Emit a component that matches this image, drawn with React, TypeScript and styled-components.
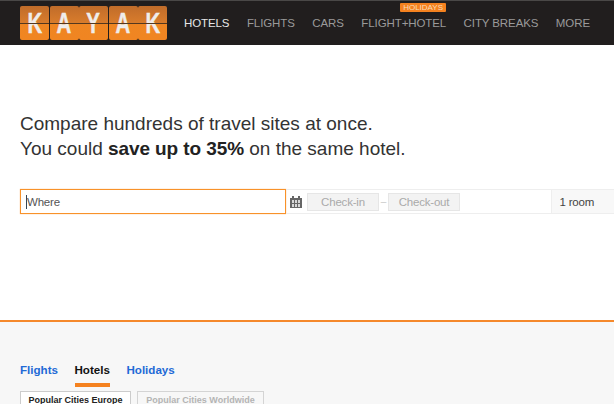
import React from 'react';
import styled, { createGlobalStyle } from 'styled-components';

const GlobalStyle = createGlobalStyle`
  html, body {
    margin: 0;
    padding: 0;
    background: #fff;
    overflow: hidden;
  }
  body {
    font-family: 'Liberation Sans', Arial, sans-serif;
  }
`;

const LETTERS = ['K', 'A', 'Y', 'A', 'K'];
const NAV_ITEMS = ['HOTELS', 'FLIGHTS', 'CARS', 'FLIGHT+HOTEL', 'CITY BREAKS', 'MORE'];

const App = () => {
  return (
    <Page>
      <GlobalStyle />
      <Header>
        <Logo>
          {LETTERS.map((letter, i) => (
            <Tile key={i}>
              <Letter>{letter}</Letter>
            </Tile>
          ))}
        </Logo>
        <Nav>
          {NAV_ITEMS.map((item) => (
            <NavItem key={item} active={item === 'HOTELS'}>
              {item}
              {item === 'FLIGHT+HOTEL' && <Badge>HOLIDAYS</Badge>}
            </NavItem>
          ))}
        </Nav>
      </Header>
      <Hero>
        <Headline>
          Compare hundreds of travel sites at once.
          <br />
          You could <strong>save up to 35%</strong> on the same hotel.
        </Headline>
        <SearchBar>
          <WhereBox>
            <Caret />
            Where
          </WhereBox>
          <DateGroup>
            <CalendarIcon width="12" height="12" viewBox="0 0 12 12">
              <path d="M0 2h12v10H0z" fill="#666" />
              <path d="M2 0h2v3H2zM8 0h2v3H8z" fill="#666" />
              <path d="M2 4h2v3H2zM5 4h2v3H5zM8 4h2v3H8zM2 8h2v3H2zM5 8h2v3H5zM8 8h2v3H8z" fill="#d8d8d8" />
            </CalendarIcon>
            <DateButton>Check-in</DateButton>
            <Dash>–</Dash>
            <DateButton>Check-out</DateButton>
          </DateGroup>
          <RoomBox>1 room</RoomBox>
        </SearchBar>
      </Hero>
      <Footer>
        <Tabs>
          <Tab>Flights</Tab>
          <Tab active>Hotels</Tab>
          <Tab>Holidays</Tab>
        </Tabs>
        <SubTabs>
          <SubTab active>Popular Cities Europe</SubTab>
          <SubTab>Popular Cities Worldwide</SubTab>
        </SubTabs>
      </Footer>
    </Page>
  );
};

export default App;

const Page = styled.div`
  width: 614px;
  height: 404px;
  overflow: hidden;
  display: flex;
  flex-direction: column;
`;

const Header = styled.div`
  flex: none;
  height: 45px;
  box-sizing: border-box;
  background: #211e1e;
  border-top: 1px solid #4a4847;
  display: flex;
  align-items: flex-start;
  padding: 5px 0 0 20px;
`;

const Logo = styled.div`
  display: flex;
  gap: 0.5px;
`;

const Tile = styled.div`
  width: 29px;
  height: 34px;
  border-radius: 2px;
  background: linear-gradient(to bottom, #c06c2a 0, #d87c2c 49%, #ef8622 51%, #f08522 100%);
  overflow: hidden;
  display: flex;
  justify-content: center;
  position: relative;

  &::after {
    content: '';
    position: absolute;
    left: 0;
    right: 0;
    top: 17px;
    height: 1px;
    background: #54381f;
  }
`;

const Letter = styled.span`
  display: inline-block;
  transform: scaleX(0.68);
  color: #efedeb;
  -webkit-text-stroke: 0.5px #efedeb;
  font-size: 30px;
  font-weight: bold;
  line-height: 34px;
`;

const Nav = styled.div`
  display: flex;
  gap: 17.5px;
  margin-left: 17px;
  padding-top: 10px;
`;

const NavItem = styled.div<{ active?: boolean }>`
  position: relative;
  font-size: 11.5px;
  letter-spacing: -0.1px;
  line-height: 15px;
  white-space: nowrap;
  color: ${(props) => (props.active ? '#e6e6e6' : '#9a9a9a')};
`;

const Badge = styled.div`
  position: absolute;
  top: -13px;
  right: 0;
  width: 46px;
  height: 9px;
  border-radius: 1px;
  background: #f5821f;
  color: #f8dcb8;
  font-size: 8px;
  letter-spacing: 0;
  line-height: 9px;
  text-align: center;
`;

const Hero = styled.div`
  flex: none;
  height: 275px;
  box-sizing: border-box;
  padding-top: 66px;
`;

const Headline = styled.div`
  margin-left: 20px;
  font-size: 19px;
  line-height: 25px;
  color: #333;

  strong {
    color: #222;
    letter-spacing: -0.1px;
  }
`;

const SearchBar = styled.div`
  margin-top: 28px;
  margin-left: 20px;
  height: 25px;
  display: flex;
`;

const WhereBox = styled.div`
  width: 266px;
  box-sizing: border-box;
  border: 1px solid #f8922a;
  box-shadow: 0 0 1px #fbb36a;
  display: flex;
  align-items: center;
  padding-left: 5px;
  font-size: 11.5px;
  letter-spacing: -0.2px;
  color: #555;
`;

const Caret = styled.span`
  width: 1px;
  height: 14px;
  background: #345;
`;

const DateGroup = styled.div`
  width: 265px;
  box-sizing: border-box;
  border-top: 1px solid #eee;
  border-bottom: 1px solid #eee;
  display: flex;
  align-items: center;
  padding-left: 4px;
`;

const CalendarIcon = styled.svg`
  flex: none;
  margin-right: 5px;
`;

const DateButton = styled.div`
  width: 72px;
  height: 18px;
  box-sizing: border-box;
  background: #f3f3f3;
  border: 1px solid #e6e6e6;
  color: #aaa;
  font-size: 11.5px;
  letter-spacing: -0.2px;
  line-height: 16px;
  text-align: center;
`;

const Dash = styled.span`
  width: 9px;
  text-align: center;
  font-size: 10px;
  color: #ccc;
`;

const RoomBox = styled.div`
  flex: 1;
  box-sizing: border-box;
  background: #f8f8f8;
  border: 1px solid #eee;
  border-right: none;
  padding-left: 7.5px;
  font-size: 11.5px;
  letter-spacing: -0.2px;
  line-height: 24px;
  color: #444;
`;

const Footer = styled.div`
  flex: 1;
  background: #f7f7f7;
  border-top: 2px solid #f5892c;
  padding: 40px 0 0 20px;
`;

const Tabs = styled.div`
  display: flex;
  gap: 16.5px;
`;

const Tab = styled.div<{ active?: boolean }>`
  height: 25px;
  box-sizing: border-box;
  font-size: 11.6px;
  line-height: 15px;
  font-weight: bold;
  color: ${(props) => (props.active ? '#111' : '#1f6ad6')};
  border-bottom: 4px solid ${(props) => (props.active ? '#f5821f' : 'transparent')};
`;

const SubTabs = styled.div`
  display: flex;
  gap: 6px;
  margin-top: 4px;
`;

const SubTab = styled.div<{ active?: boolean }>`
  width: ${(props) => (props.active ? '111px' : '127px')};
  height: 20px;
  box-sizing: border-box;
  text-align: center;
  background: ${(props) => (props.active ? '#fff' : '#f7f7f7')};
  border: 1px solid ${(props) => (props.active ? '#ccc' : '#d4d4d4')};
  font-size: 9px;
  line-height: 16px;
  font-weight: bold;
  color: ${(props) => (props.active ? '#222' : '#b4b4b4')};
`;
